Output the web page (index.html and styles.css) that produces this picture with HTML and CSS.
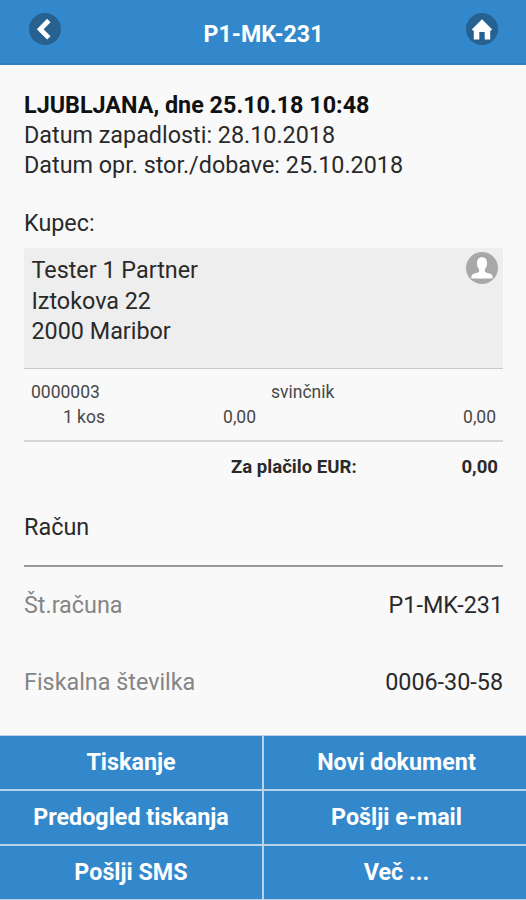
FILE: index.html
```html
<!DOCTYPE html>
<html lang="sl">
<head>
<meta charset="utf-8">
<title>P1-MK-231</title>
<link rel="stylesheet" href="styles.css">
</head>
<body>
<header class="bar">
  <a class="round">
    <svg viewBox="0 0 32 32" width="32" height="32"><path d="M19.8 7.500 11.200 16.200 19.800 24.900" fill="none" stroke="#fff" stroke-width="4.800"/></svg>
  </a>
  <h1 class="title"><span>P1-MK-231</span></h1>
  <a class="round">
    <svg viewBox="0 0 32 32" width="32" height="32"><path d="M16 6.3 26.2 16.5 24.2 18V26.6H18.7V19H13.3V26.6H7.8V18L5.8 16.5Z" fill="#fff"/></svg>
  </a>
</header>
<main class="content">
  <section class="dates">
    <strong>LJUBLJANA, dne 25.10.18 10:48</strong>
    <span class="due">Datum zapadlosti: 28.10.2018</span>
    <span class="service">Datum opr. stor./dobave: 25.10.2018</span>
  </section>
  <div class="label"><span>Kupec:</span></div>
  <section class="buyer">
    <address class="address"><span>Tester 1 Partner</span><span>Iztokova 22</span><span>2000 Maribor</span></address>
    <svg class="person" viewBox="0 0 32 32" width="32" height="32"><circle cx="16" cy="16" r="16" fill="#a8a8a8"/><path d="M16 5.300c3.400 0 5 2.500 5 6 0 2.600-.8 4.600-2.100 6v2.100c.7 1.200 2.800 1.500 4.800 2.200 2.200.8 3 1.700 3 4.800H5.300c0-3.100.8-4 3-4.800 2-.7 4.100-1 4.800-2.200v-2.100c-1.300-1.400-2.100-3.400-2.100-6 0-3.500 1.600-6 5-6Z" fill="#fff"/></svg>
  </section>
  <section class="item">
    <div class="row"><span class="code">0000003</span><span class="name">svinčnik</span></div>
    <div class="row"><span class="qty">1 kos</span><span class="price">0,00</span><span class="amount">0,00</span></div>
  </section>
  <section class="total"><span>Za plačilo EUR:</span><span class="sum">0,00</span></section>
  <h2 class="heading">Račun</h2>
  <dl class="fields">
    <div class="field"><dt>Št.računa</dt><dd>P1-MK-231</dd></div>
    <div class="field"><dt>Fiskalna številka</dt><dd>0006-30-58</dd></div>
  </dl>
</main>
<nav class="actions">
  <button>Tiskanje</button><button>Novi dokument</button>
  <button>Predogled tiskanja</button><button>Pošlji e-mail</button>
  <button>Pošlji SMS</button><button>Več ...</button>
</nav>
</body>
</html>
```
FILE: styles.css
```css
* { box-sizing: border-box; }
body {
  margin: 0;
  height: 900px;
  display: flex;
  flex-direction: column;
  overflow: hidden;
  background: #f9f9f9;
  color: #2a2a2a;
  font: 23.35px/30.2px Roboto, sans-serif;
}
.bar {
  height: 65px;
  padding: 13px 28px 0 29px;
  display: flex;
  justify-content: space-between;
  background: #3388cc;
  border-bottom: 2px solid #2a80c2;
}
.round {
  width: 32px;
  height: 32px;
  border-radius: 50%;
  background: #266190;
}
.round svg { display: block; }
.title {
  margin: 6px 0 0;
  color: #fff;
  font-size: 23.2px;
  line-height: 30px;
  font-weight: 700;
}
.content { flex: none; height: 670px; padding: 24.6px 23px 0 24px; }
.dates { display: flex; flex-direction: column; height: 90.4px; }
.dates strong { color: #111; }
.label { height: 68px; padding-top: 28px; }
.buyer {
  height: 121px;
  padding: 7.5px 5px 0 7.5px;
  display: flex;
  justify-content: space-between;
  background: #eee;
  border-bottom: 1px solid #c9c9c9;
}
.address { display: flex; flex-direction: column; font-style: normal; }
.person { margin-top: -3.5px; }
.item {
  height: 73px;
  padding: 11px 7px 0;
  border-bottom: 2px solid #d5d5d5;
  font-size: 17.5px;
  line-height: 25px;
  color: #484848;
}
.row { display: flex; }
.code { width: 240px; }
.qty { width: 74px; text-align: right; }
.price { width: 151px; text-align: right; }
.amount { flex: 1; text-align: right; }
.total {
  height: 70px;
  padding: 13px 5px 0 207px;
  display: flex;
  justify-content: space-between;
  font-size: 18.6px;
  line-height: 25px;
  font-weight: 700;
}
.heading {
  margin: 0;
  height: 55px;
  font-size: 23.4px;
  line-height: 30px;
  font-weight: 400;
  border-bottom: 2px solid #999;
}
.fields { margin: 0; }
.field { display: flex; justify-content: space-between; height: 77px; padding-top: 23px; }
.field dt { color: #858585; }
.field dd { margin: 0; }
.actions {
  display: grid;
  grid-template-columns: 262px 262px;
  grid-template-rows: 53px 53px 53px;
  gap: 2px;
  background: #b7d4ec;
  padding: 1px 0;
}
.actions button {
  border: 0;
  padding: 0 0 2px;
  background: #3388cc;
  color: #fff;
  font: 700 23.3px/30px Roboto, sans-serif;
}
.actions button:nth-child(even) { padding-left: 3px; }
```
